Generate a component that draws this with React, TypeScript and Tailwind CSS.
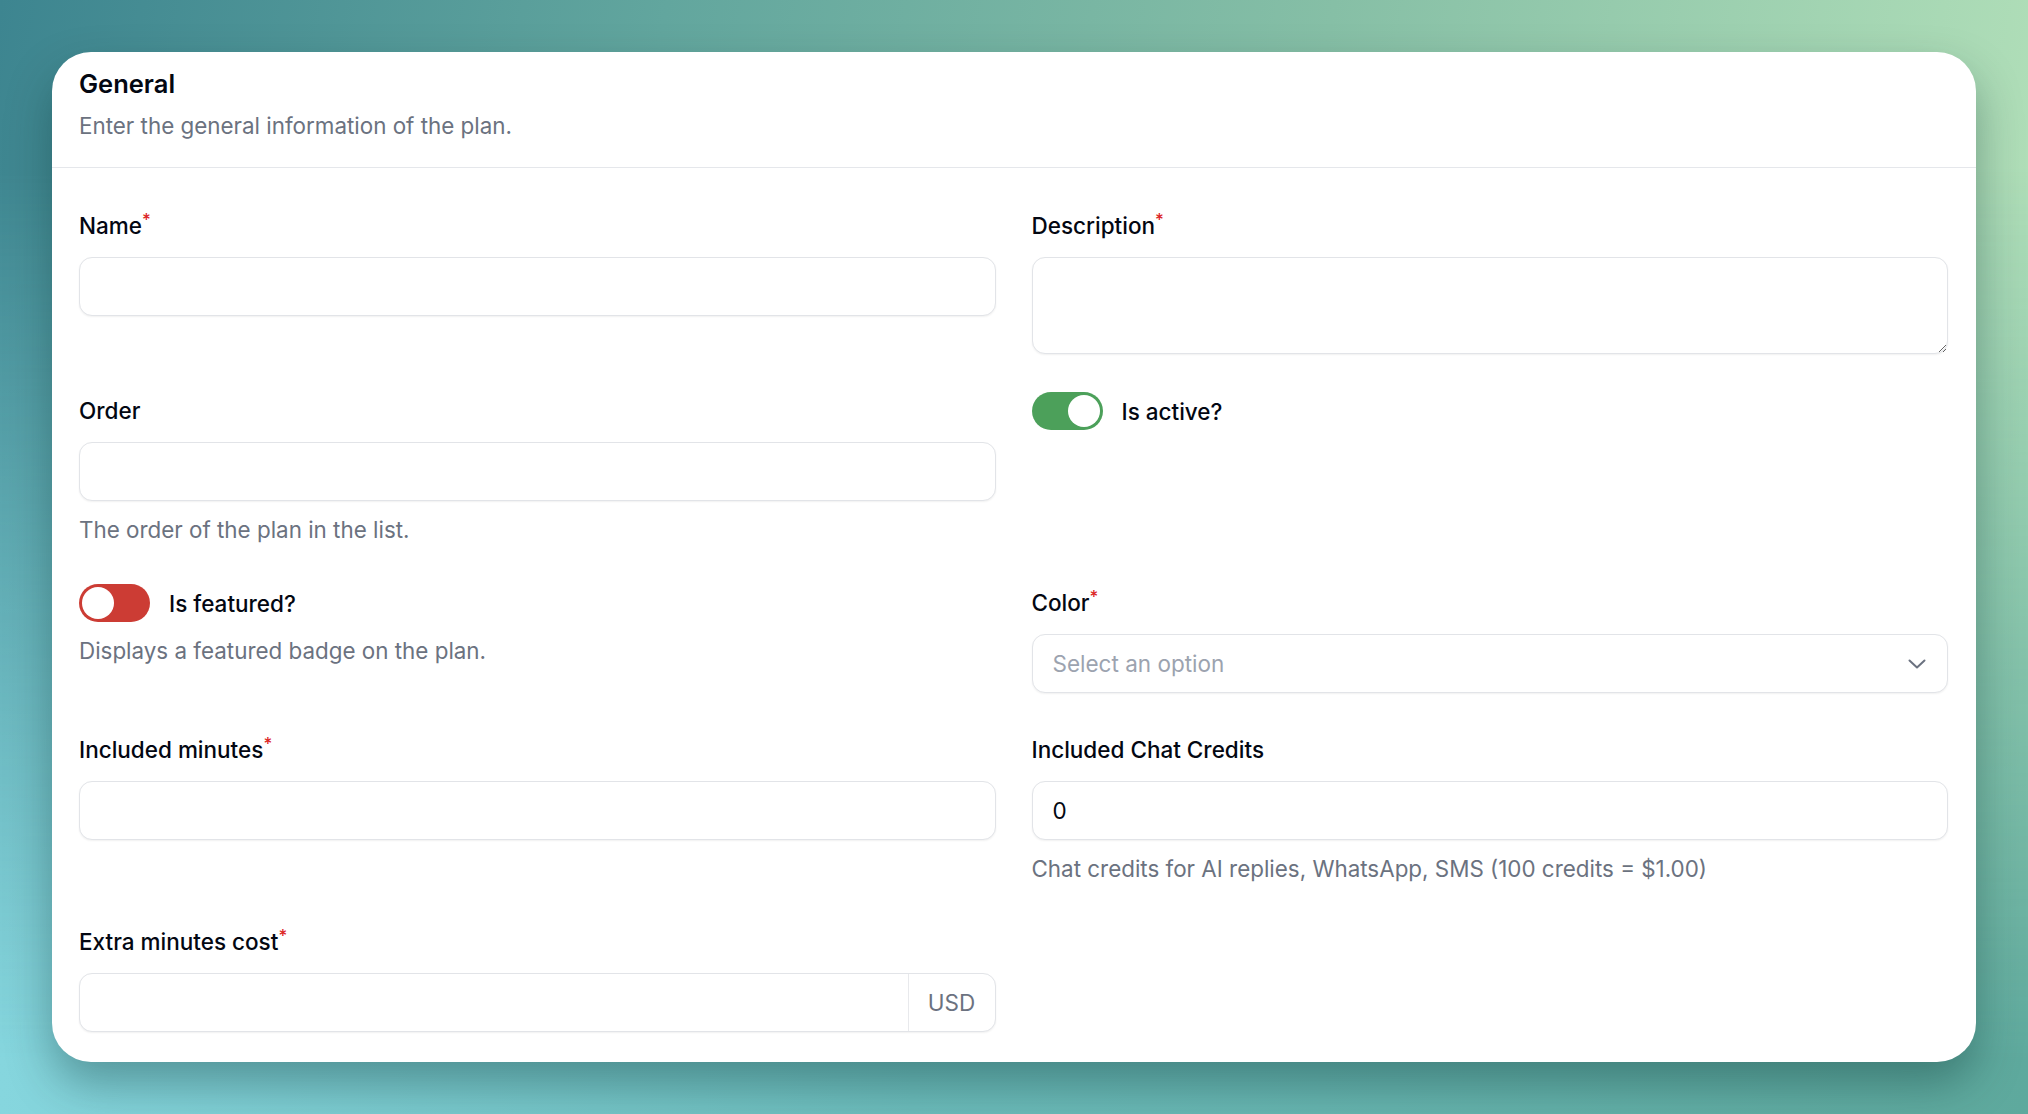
import React from "react";

const font = { fontFamily: "Inter, 'Noto Sans', sans-serif" };

function Label({ text, required }: { text: string; required?: boolean }) {
  return (
    <label className="block text-[22.5px] leading-[39px] font-medium text-[#030712]">
      {text}
      {required && <sup className="text-[#dc2626] font-medium">*</sup>}
    </label>
  );
}

function Help({ text }: { text: string }) {
  return <p className="mt-[1px] text-[22.4px] leading-[32px] text-[#6b7280]">{text}</p>;
}

function Input({ value }: { value?: string }) {
  return (
    <div className="h-[59px] rounded-[13px] border border-[#e2e4e8] bg-white shadow-[0_1px_2px_rgba(0,0,0,0.06)] flex items-center px-[20px]">
      <span className="text-[22.5px] text-[#030712]">{value}</span>
    </div>
  );
}

function Toggle({ on, label }: { on: boolean; label: string }) {
  return (
    <div className="flex items-center gap-[19px] h-[39px]">
      <div
        className={
          "w-[71px] h-[38px] rounded-full p-[3px] flex items-center " +
          (on ? "bg-[#4ca05a] justify-end" : "bg-[#cc3c34] justify-start")
        }
      >
        <div className="w-[32px] h-[32px] rounded-full bg-white" />
      </div>
      <span className="pt-[2px] text-[22.5px] font-medium text-[#030712]">{label}</span>
    </div>
  );
}

export default function App() {
  return (
    <div
      className="relative w-full min-h-[1114px] p-[52px] overflow-hidden bg-[linear-gradient(100deg,#3d8590_0%,#62a69e_30%,#86bfa6_60%,#b9e5bc_100%)]"
      style={font}
    >
      <div className="absolute inset-0 bg-[linear-gradient(90deg,#86d6de_0%,#6cbcbb_45%,#5ea99d_100%)] [mask-image:linear-gradient(to_bottom,transparent_15%,black_95%)]" />
      <div className="relative bg-white rounded-[39px] shadow-[0_22px_45px_rgba(0,40,40,0.35)]">
        <div className="px-[27px] pt-[12px] pb-[25px] border-b border-[#e5e7eb]">
          <h2 className="text-[25.5px] leading-[39px] font-semibold text-[#030712]">General</h2>
          <p className="mt-[7px] text-[22.4px] leading-[32px] text-[#6b7280]">
            Enter the general information of the plan.
          </p>
        </div>
        <div className="grid grid-cols-2 gap-x-[36px] gap-y-[37px] pl-[27px] pr-[28px] pt-[38px] pb-[30px]">
          {/* Row 1 */}
          <div className="flex flex-col gap-[12px]">
            <Label text="Name" required />
            <Input />
          </div>
          <div className="flex flex-col gap-[12px]">
            <Label text="Description" required />
            <textarea className="h-[97px] rounded-[13px] border border-[#e2e4e8] bg-white shadow-[0_1px_2px_rgba(0,0,0,0.06)] resize-y outline-none px-[20px] py-[12px] text-[22.5px]" />
          </div>

          {/* Row 2 */}
          <div className="flex flex-col gap-[12px]">
            <Label text="Order" />
            <Input />
            <Help text="The order of the plan in the list." />
          </div>
          <div>
            <Toggle on label="Is active?" />
          </div>

          {/* Row 3 */}
          <div className="flex flex-col gap-[12px]">
            <Toggle on={false} label="Is featured?" />
            <Help text="Displays a featured badge on the plan." />
          </div>
          <div className="flex flex-col gap-[12px]">
            <Label text="Color" required />
            <div className="h-[59px] rounded-[13px] border border-[#e2e4e8] bg-white shadow-[0_1px_2px_rgba(0,0,0,0.06)] flex items-center justify-between pl-[20px] pr-[21px]">
              <span className="text-[22.5px] text-[#9ca3af]">Select an option</span>
              <svg width="18" height="10" viewBox="0 0 18 10" fill="none">
                <polyline points="1.5,1.5 9,8.5 16.5,1.5" stroke="#6b7280" strokeWidth="2" strokeLinecap="round" strokeLinejoin="round" />
              </svg>
            </div>
          </div>

          {/* Row 4 */}
          <div className="flex flex-col gap-[12px]">
            <Label text="Included minutes" required />
            <Input />
          </div>
          <div className="flex flex-col gap-[12px]">
            <Label text="Included Chat Credits" />
            <Input value="0" />
            <Help text="Chat credits for AI replies, WhatsApp, SMS (100 credits = $1.00)" />
          </div>

          {/* Row 5 */}
          <div className="flex flex-col gap-[12px]">
            <Label text="Extra minutes cost" required />
            <div className="h-[59px] rounded-[13px] border border-[#e2e4e8] bg-white shadow-[0_1px_2px_rgba(0,0,0,0.06)] flex">
              <div className="flex-1" />
              <div className="w-[87px] border-l border-[#e8e9ec] flex items-center justify-center text-[22.5px] text-[#6b7280]">
                USD
              </div>
            </div>
          </div>
          <div />
        </div>
      </div>
    </div>
  );
}
